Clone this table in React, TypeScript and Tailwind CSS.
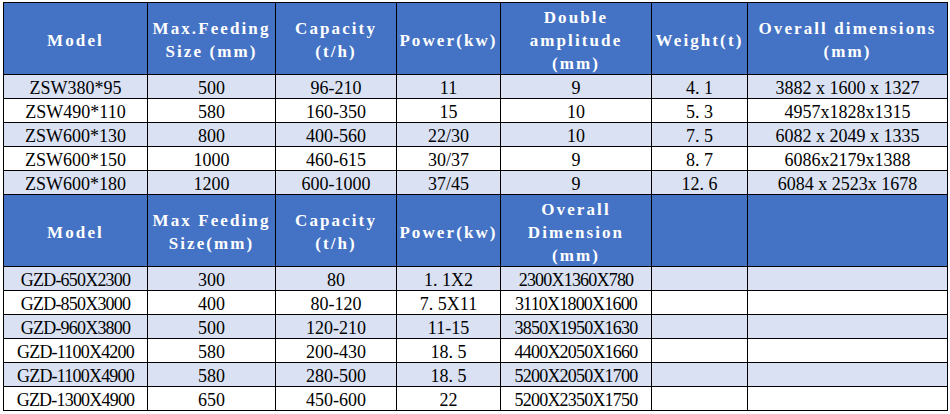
const COLS = 'grid-cols-[143px_127px_120px_103px_150px_95px_199px]';

const HEAD_1 = [
  'Model',
  'Max.Feeding\nSize (mm)',
  'Capacity\n(t/h)',
  'Power(kw)',
  'Double\namplitude\n(mm)',
  'Weight(t)',
  'Overall dimensions\n(mm)',
];

const ROWS_1 = [
  ['ZSW380*95', '500', '96-210', '11', '9', '4. 1', '3882 x 1600 x 1327'],
  ['ZSW490*110', '580', '160-350', '15', '10', '5. 3', '4957x1828x1315'],
  ['ZSW600*130', '800', '400-560', '22/30', '10', '7. 5', '6082 x 2049 x 1335'],
  ['ZSW600*150', '1000', '460-615', '30/37', '9', '8. 7', '6086x2179x1388'],
  ['ZSW600*180', '1200', '600-1000', '37/45', '9', '12. 6', '6084 x 2523x 1678'],
];

const HEAD_2 = [
  'Model',
  'Max Feeding\nSize(mm)',
  'Capacity\n(t/h)',
  'Power(kw)',
  'Overall\nDimension\n(mm)',
  '',
  '',
];

const ROWS_2 = [
  ['GZD-650X2300', '300', '80', '1. 1X2', '2300X1360X780', '', ''],
  ['GZD-850X3000', '400', '80-120', '7. 5X11', '3110X1800X1600', '', ''],
  ['GZD-960X3800', '500', '120-210', '11-15', '3850X1950X1630', '', ''],
  ['GZD-1100X4200', '580', '200-430', '18. 5', '4400X2050X1660', '', ''],
  ['GZD-1100X4900', '580', '280-500', '18. 5', '5200X2050X1700', '', ''],
  ['GZD-1300X4900', '650', '450-600', '22', '5200X2350X1750', '', ''],
];

function HeadRow({ cells }: { cells: string[] }) {
  return (
    <>
      {cells.map((c, i) => (
        <div
          key={i}
          className="h-[71px] bg-[#4472c4] flex items-center justify-center pt-[3px] text-center whitespace-pre text-white font-bold text-[17px] leading-[23px] tracking-[2.1px]"
        >
          {c}
        </div>
      ))}
    </>
  );
}

function BodyRow({ cells, shaded, tight }: { cells: string[]; shaded: boolean; tight?: boolean }) {
  return (
    <>
      {cells.map((c, i) => (
        <div
          key={i}
          className={`h-[23px] flex items-center justify-center pt-[2px] whitespace-pre text-black text-[18px] leading-none ${
            shaded ? 'bg-[#d9e1f2]' : 'bg-white'
          } ${tight && (i === 0 || i === 4) ? 'tracking-[-0.8px]' : ''}`}
        >
          {c}
        </div>
      ))}
    </>
  );
}

export default function App() {
  return (
    <div className="w-[950px] h-[414px] bg-white pt-[2px] pl-[3px] overflow-hidden font-['Liberation_Serif',serif]">
      <div className={`grid ${COLS} w-max gap-px p-px bg-black`}>
        <HeadRow cells={HEAD_1} />
        {ROWS_1.map((r, i) => (
          <BodyRow key={r[0]} cells={r} shaded={i % 2 === 0} />
        ))}
        <HeadRow cells={HEAD_2} />
        {ROWS_2.map((r, i) => (
          <BodyRow key={r[0]} cells={r} shaded={i % 2 === 0} tight />
        ))}
      </div>
    </div>
  );
}
